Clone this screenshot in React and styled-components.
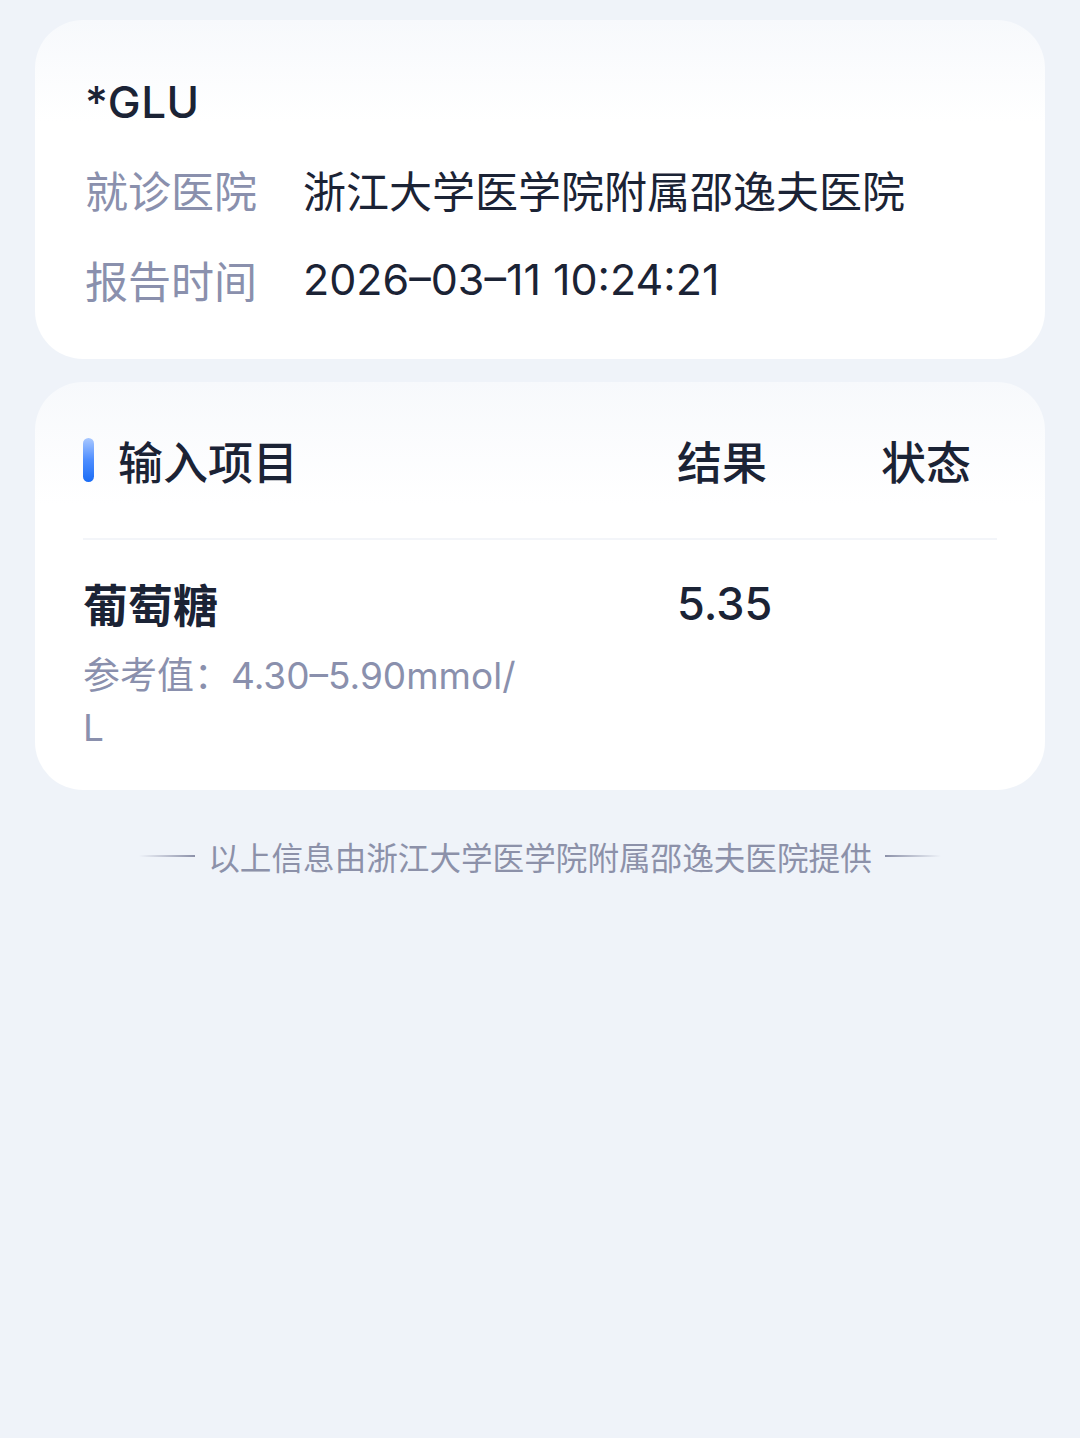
import React from 'react';
import styled, { createGlobalStyle } from 'styled-components';

const GlobalStyle = createGlobalStyle`
  html, body {
    margin: 0;
    padding: 0;
    background: #eff3f9;
  }
  body {
    font-family: Inter, "Noto Sans CJK SC", sans-serif;
    color: #1b2335;
  }
`;

const Page = styled.div`
  min-height: 1438px;
  padding: 20px 35px 0;
  box-sizing: border-box;
  display: flex;
  flex-direction: column;
  gap: 23px;
`;

const Card = styled.section`
  background: linear-gradient(180deg, #f7f9fc 0%, #ffffff 30%);
  border-radius: 48px;
  padding: ${({ $pad }) => $pad};
`;

const Title = styled.h1`
  margin: 0 0 12px;
  font-size: 44px;
  font-weight: 500;
  line-height: 60px;
  letter-spacing: 0.5px;
`;

const InfoRow = styled.div`
  display: flex;
  align-items: center;
  height: 90px;
  font-size: 43px;
`;

const InfoLabel = styled.span`
  width: 218px;
  flex-shrink: 0;
  color: #8a90ad;
  font-family: "Noto Sans CJK SC", sans-serif;
`;

const InfoValue = styled.span`
  color: #1b2335;
`;

const Grid = styled.div`
  display: grid;
  grid-template-columns: 594px 204px 1fr;
  align-items: center;
`;

const HeaderRow = styled(Grid)`
  height: 156px;
  border-bottom: 2px solid #f3f5f9;
  font-size: 45px;
  font-weight: 500;
  font-family: "Noto Sans CJK SC", sans-serif;
`;

const HeadTitle = styled.div`
  display: flex;
  align-items: center;
  gap: 24px;
`;

const Bar = styled.span`
  width: 11px;
  height: 44px;
  border-radius: 6px;
  background: linear-gradient(180deg, #a9c8ff 0%, #4d8dff 50%, #1a6cf5 100%);
`;

const ItemRow = styled(Grid)`
  align-items: start;
  padding: 34px 0 36px;
`;

const ItemName = styled.div`
  font-size: 45px;
  font-weight: 700;
  line-height: 60px;
  font-family: "Noto Sans CJK SC", sans-serif;
`;

const RefText = styled.div`
  margin-top: 16px;
  max-width: 442px;
  font-size: 37px;
  line-height: 52px;
  color: #8a90ad;
  word-break: break-all;
`;

const Result = styled.div`
  font-size: 45px;
  font-weight: 500;
  line-height: 60px;
`;

const Footer = styled.div`
  margin-top: 20px;
  display: flex;
  align-items: center;
  justify-content: center;
  gap: 13px;
  font-size: 31.6px;
  color: #8c91a9;
  font-family: "Noto Sans CJK SC", sans-serif;
`;

const Line = styled.span`
  width: 56px;
  height: 2px;
  background: ${({ $left }) =>
    $left
      ? 'linear-gradient(90deg, rgba(140,145,169,0), #8c91a9)'
      : 'linear-gradient(90deg, #8c91a9, rgba(140,145,169,0))'};
`;

export default function App() {
  return (
    <>
      <GlobalStyle />
      <Page>
        <Card $pad="52px 50px 35px">
          <Title>*GLU</Title>
          <InfoRow>
            <InfoLabel>就诊医院</InfoLabel>
            <InfoValue>浙江大学医学院附属邵逸夫医院</InfoValue>
          </InfoRow>
          <InfoRow>
            <InfoLabel>报告时间</InfoLabel>
            <InfoValue>2026–03–11 10:24:21</InfoValue>
          </InfoRow>
        </Card>
        <Card $pad="0 48px 0">
          <HeaderRow>
            <HeadTitle>
              <Bar />
              输入项目
            </HeadTitle>
            <div>结果</div>
            <div>状态</div>
          </HeaderRow>
          <ItemRow>
            <div>
              <ItemName>葡萄糖</ItemName>
              <RefText>参考值：4.30–5.90mmol/L</RefText>
            </div>
            <Result>5.35</Result>
            <div />
          </ItemRow>
        </Card>
        <Footer>
          <Line $left />
          以上信息由浙江大学医学院附属邵逸夫医院提供
          <Line />
        </Footer>
      </Page>
    </>
  );
}
